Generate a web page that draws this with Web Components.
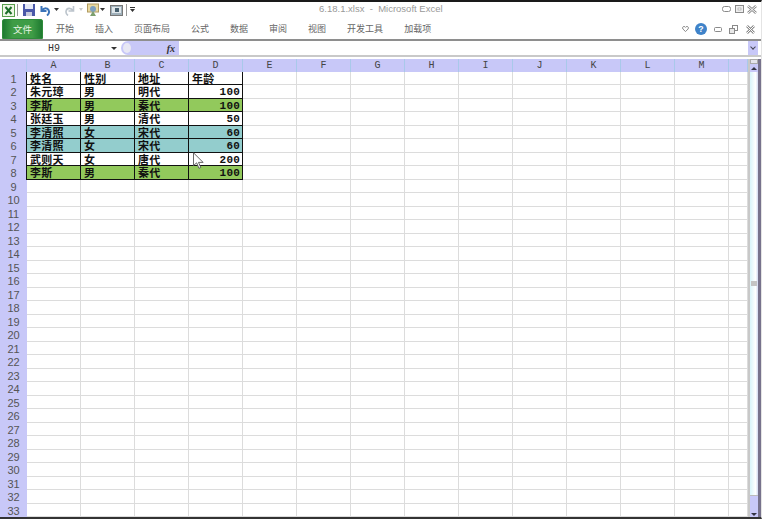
<!DOCTYPE html>
<html lang="zh">
<head>
<meta charset="utf-8">
<title>6.18.1.xlsx - Microsoft Excel</title>
<style>
html, body { margin: 0; height: 100%; background: #fff; overflow: hidden; }
body { font-family: "Liberation Sans", "Noto Sans CJK SC", sans-serif; }
excel-window { width: 762px; height: 519px; }
</style>
</head>
<body>
<excel-window>
	<title-bar slot="top">6.18.1.xlsx&nbsp; - &nbsp;Microsoft Excel</title-bar>
	<ribbon-tabs slot="top"></ribbon-tabs>
	<formula-bar slot="top" name="H9"></formula-bar>
	<sheet-grid></sheet-grid>
	<sheet-scrollbar slot="side"></sheet-scrollbar>
</excel-window>

<script>
// window frame, everything else sits in its slots
class ExcelWindow extends HTMLElement {
	constructor() {
		super();
		this.attachShadow({ mode: 'open' });
		this.shadowRoot.innerHTML = `
		<style>
			:host { display: flex; flex-direction: column; box-sizing: border-box; border-top: 2px solid #1a1a1a; border-bottom: 2px solid #333; border-right: 1px solid #e4e4e4; background: #fff; overflow: hidden; }
			.body { flex: 1; display: flex; min-height: 0; }
		</style>
		<slot name="top"></slot>
		<div class="body"><slot></slot><slot name="side"></slot></div>`;
	}
}

class TitleBar extends HTMLElement {
	constructor() {
		super();
		this.attachShadow({ mode: 'open' });
		this.shadowRoot.innerHTML = `
		<style>
			:host { display: flex; align-items: center; height: 16px; position: relative; font: 9.5px "Liberation Sans", sans-serif; color: #999; }
			.qat { display: flex; align-items: center; padding-left: 2px; }
			.title { position: absolute; left: 319px; top: 0; line-height: 13px; white-space: nowrap; }
			.sep { width: 1px; height: 12px; background: #999; }
			.caption { margin-left: auto; display: flex; padding-right: 4px; align-items: center; margin-top: -2px; }
			svg { display: block; flex: none; }
		</style>
		<div class="qat">
			<svg width="13" height="13" viewBox="0 0 13 13"><rect x=".5" y=".5" width="12" height="12" fill="#eef6e6" stroke="#5aa04e"/><path d="M3.500 3l6 7M9.500 3l-6 7" stroke="#1d6f2a" stroke-width="2"/></svg>
			<span class="sep" style="margin-left:2px"></span>
			<svg width="12" height="12" viewBox="0 0 12 12" style="margin-left:5px"><rect x="0" y="0" width="12" height="12" fill="#4a58a8"/><rect x="2" y="0" width="8" height="5" fill="#e4e8f5"/><rect x="3" y="8" width="6" height="4" fill="#c8cbdd"/></svg>
			<svg width="11" height="11" viewBox="0 0 11 11" style="margin-left:5px"><path d="M1.500 1v5h5M2 5.500C4 2.500 8.500 2.500 9 6.500c.2 1.500-.6 3-2 4" fill="none" stroke="#3a73b8" stroke-width="2"/></svg>
			<svg width="5" height="4" viewBox="0 0 5 4" style="margin-left:3px"><path d="M0 0h5L2.500 3z" fill="#333"/></svg>
			<svg width="11" height="11" viewBox="0 0 11 11" style="margin-left:5px"><path d="M9.500 1v5h-5M9 5.500C7 2.500 2.500 2.500 2 6.500c-.2 1.500.6 3 2 4" fill="none" stroke="#bcc4cc" stroke-width="1.600"/></svg>
			<svg width="4" height="4" viewBox="0 0 4 4" style="margin-left:4px"><path d="M0 0h4L2 3z" fill="#ccc"/></svg>
			<svg width="12" height="14" viewBox="0 0 12 14" style="margin-left:4px"><rect x=".5" y="1" width="11" height="8" fill="#e9d9a0" stroke="#b09a60"/><circle cx="6" cy="6" r="3" fill="#7da0c0"/><path d="M3 13l3-5 3 5z" fill="#7d9f6e"/></svg>
			<svg width="5" height="4" viewBox="0 0 5 4" style="margin-left:1px"><path d="M0 0h5L2.500 3z" fill="#333"/></svg>
			<svg width="13" height="11" viewBox="0 0 13 11" style="margin-left:5px"><rect x=".5" y=".5" width="12" height="10" fill="#9fb0ba" stroke="#777"/><rect x="2" y="2" width="9" height="6" fill="#dfe6ea"/><rect x="5" y="3" width="4" height="4" fill="#47606f"/></svg>
			<span class="sep" style="margin-left:3px"></span>
			<svg width="5" height="6" viewBox="0 0 5 6" style="margin-left:3px"><path d="M0 0h5v1H0zM0 2h5L2.500 5z" fill="#333"/></svg>
		</div>
		<div class="title"><slot></slot></div>
		<div class="caption">
			<svg width="9" height="6" viewBox="0 0 9 6"><rect x=".5" y=".5" width="8" height="5" rx="2" fill="#fff" stroke="#8a8a8a"/></svg>
			<svg width="9" height="8" viewBox="0 0 9 8" style="margin-left:4px"><rect x=".5" y=".5" width="8" height="7" fill="#eee" stroke="#8a8a8a"/><rect x="3" y="3" width="3" height="2" fill="#fff" stroke="#999" stroke-width=".6"/></svg>
			<svg width="10" height="9" viewBox="0 0 10 9" style="margin-left:3px"><path d="M1 1l8 7M9 1l-8 7" stroke="#8a8a8a" stroke-width="2.500"/><path d="M1 1l8 7M9 1l-8 7" stroke="#fff" stroke-width="1"/></svg>
		</div>`;
	}
}

class RibbonTabs extends HTMLElement {
	constructor() {
		super();
		this.attachShadow({ mode: 'open' });
		const tabs = [['开始', 13], ['插入', 21], ['页面布局', 21], ['公式', 21], ['数据', 21], ['审阅', 21], ['视图', 21], ['开发工具', 21], ['加载项', 21]];
		this.shadowRoot.innerHTML = `
		<style>
			:host { display: flex; align-items: flex-end; height: 21px; border-bottom: 2px solid #8e8e8e; font-size: 9px; color: #666; }
			.file { box-sizing: border-box; width: 41px; height: 20px; margin-left: 2px; border-radius: 2px 2px 0 0; border: 1px solid #2e8b3a; background: linear-gradient(90deg, #1e7a30, #3f9c46 25%, #3f9c46 75%, #1e7a30); color: #e8f5e4; font-size: 9.5px; display: flex; align-items: center; justify-content: center; }
			.tab { height: 20px; line-height: 21px; white-space: nowrap; }
			.right { margin-left: auto; display: flex; align-items: center; height: 20px; padding-right: 6px; }
			svg { display: block; flex: none; }
		</style>
		<div class="file">文件</div>
		${tabs.map(t => `<div class="tab" style="margin-left:${t[1]}px">${t[0]}</div>`).join('')}
		<div class="right">
			<svg width="7" height="6" viewBox="0 0 8 7"><path d="M4 6.500L1 3.500C0 2 1 .5 2.300.5 3 .5 3.600 1 4 1.600 4.400 1 5 .5 5.700.5 7 .5 8 2 7 3.500z" fill="#fff" stroke="#777"/></svg>
			<svg width="12" height="12" viewBox="0 0 13 13" style="margin-left:6px"><circle cx="6.500" cy="6.500" r="6.500" fill="#3f83c9"/><text x="6.500" y="10" text-anchor="middle" font-family="Liberation Sans" font-weight="700" font-size="9.500" fill="#fff">?</text></svg>
			<svg width="8" height="5" viewBox="0 0 8 5" style="margin-left:7px"><rect x=".5" y=".5" width="7" height="4" rx="1" fill="#fff" stroke="#8a8a8a"/></svg>
			<svg width="9" height="9" viewBox="0 0 9 9" style="margin-left:7px"><rect x="3.500" y=".5" width="5" height="5" fill="#fff" stroke="#8a8a8a"/><rect x=".5" y="3.500" width="5" height="5" fill="#e8e8e8" stroke="#8a8a8a"/></svg>
			<svg width="9" height="9" viewBox="0 0 9 9" style="margin-left:8px"><path d="M1 1l7 7M8 1l-7 7" stroke="#8a8a8a" stroke-width="2.500"/><path d="M1 1l7 7M8 1l-7 7" stroke="#fff" stroke-width="1"/></svg>
		</div>`;
	}
}

class FormulaBar extends HTMLElement {
	constructor() {
		super();
		this.attachShadow({ mode: 'open' });
		this.shadowRoot.innerHTML = `
		<style>
			:host { display: flex; height: 14px; border-bottom: 2px solid #c9c9c9; margin-bottom: 2px; background: #fff; font: 10px "Liberation Mono", monospace; color: #333; align-items: stretch; }
			.name { width: 121px; box-sizing: border-box; display: flex; align-items: center; padding: 1px 0 0 48px; position: relative; }
			.name i { position: absolute; left: 111px; top: 6px; border: 3px solid transparent; border-top: 3px solid #333; border-bottom: 0; }
			.mid { width: 58px; background: #c8c8f8; border-radius: 7px 0 0 7px; display: flex; align-items: center; justify-content: flex-end; padding-right: 4px; box-sizing: border-box; font: italic 700 10px "Liberation Serif", serif; color: #333; position: relative; }
			.mid b { position: absolute; left: 2px; top: 2px; width: 8px; height: 10px; background: #e8e8f4; border-radius: 50%; }
			.input { flex: 1; }
			.more { width: 10px; margin-right: 3px; background: #c8c8f8; display: flex; align-items: center; justify-content: center; }
			.more i { width: 3px; height: 3px; border: solid #445; border-width: 0 1.5px 1.5px 0; transform: rotate(45deg); margin-top: -2px; }
		</style>
		<div class="name">${this.getAttribute('name')}<i></i></div>
		<div class="mid"><b></b>fx</div>
		<div class="input"></div>
		<div class="more"><i></i></div>`;
	}
}

class SheetGrid extends HTMLElement {
	constructor() {
		super();
		this.attachShadow({ mode: 'open' });
		const G = 'g', T = 't';
		const data = [
			['姓名', '性别', '地址', '年龄', ''],
			['朱元璋', '男', '明代', 100, ''],
			['李斯', '男', '秦代', 100, G],
			['张廷玉', '男', '清代', 50, ''],
			['李清照', '女', '宋代', 60, T],
			['李清照', '女', '宋代', 60, T],
			['武则天', '女', '唐代', 200, ''],
			['李斯', '男', '秦代', 100, G]
		];
		const letters = 'ABCDEFGHIJKLM'.split('');
		let html = '<div class="corner"></div>';
		letters.forEach(l => html += `<div class="col">${l}</div>`);
		html += '<div class="col"></div>';
		for (let r = 1; r <= 33; r++) {
			html += `<div class="row">${r}</div>`;
			const line = data[r - 1];
			for (let c = 0; c < 14; c++) {
				if (line && c < 4) {
					const num = typeof line[c] === 'number';
					html += `<div class="cell data ${line[4]} ${num ? 'num' : ''}">${line[c]}</div>`;
				} else {
					html += '<div class="cell"></div>';
				}
			}
		}
		this.shadowRoot.innerHTML = `
		<style>
			:host { display: block; flex: 1; min-width: 0; position: relative; overflow: hidden; background: #fff; }
			.grid { display: grid; grid-template-columns: 27px repeat(13, 54px) 19px; grid-template-rows: 12.5px repeat(33, 13.5px); }
			.corner, .col, .row { background: #c8c8f8; color: #555; display: flex; align-items: center; justify-content: center; box-sizing: border-box; padding-top: 1px; }
			.corner { border-right: 1px solid #b0c8ee; }
			.col { border-right: 1px solid #a9c9ea; color: #444; font: 10px "Liberation Mono", monospace; }
			.row { font: 11px "Liberation Sans", sans-serif; }
			.cell { box-sizing: border-box; border-right: 1px solid #dcdcdc; border-bottom: 1px solid #dcdcdc; }
			.data { border-color: #111; color: #111; font-size: 11px; font-weight: 700; line-height: 12px; padding: 1px 0 0 3px; white-space: nowrap; letter-spacing: .2px; }
			.g { background: #92c95c; }
			.t { background: #93cdcd; }
			.num { text-align: right; padding: 1px 2px 0 0; font: 700 11px/13px "Liberation Mono", monospace; }
			svg { position: absolute; left: 193px; top: 93px; }
		</style>
		<div class="grid">${html}</div>
		<svg width="11" height="18" viewBox="0 0 12 19"><path d="M.5.5v14l3.500-3 2.500 6 2-1-2.500-5.500h5z" fill="#fff" stroke="#555"/></svg>`;
		// the table's left edge
		this.shadowRoot.querySelectorAll('.data').forEach((el, i) => {
			if (i % 4 === 0) el.style.boxShadow = '-1px 0 0 #111';
		});
	}
}

class SheetScrollbar extends HTMLElement {
	constructor() {
		super();
		this.attachShadow({ mode: 'open' });
		this.shadowRoot.innerHTML = `
		<style>
			:host { display: flex; flex-direction: column; flex: none; width: 13px; box-sizing: border-box; background: #c8c8f8; border-left: 2px solid #c8c8c8; border-right: 3px solid #77728c; }
			.split { height: 5px; background: #e4e4ec; border: 1px solid #aaa; box-sizing: border-box; }
			.btn { height: 8px; display: flex; align-items: center; justify-content: center; background: #c8c8f8; }
			.up { border: 3px solid transparent; border-bottom: 3px solid #334; border-top: 0; }
			.thumb { height: 424px; flex: none; background: linear-gradient(90deg, #d8f4fa, #fff 70%, #cfd8f0); border-bottom: 1px solid #bbb; box-sizing: border-box; display: flex; align-items: center; justify-content: center; }
			.thumb i { width: 6px; height: 5px; background: #c4c4c4; }
			.track { flex: 1; }
			.down { border: 3px solid transparent; border-top: 3px solid #334; border-bottom: 0; }
		</style>
		<div class="split"></div>
		<div class="btn"><i class="up"></i></div>
		<div class="thumb"><i></i></div>
		<div class="track"></div>
		<div class="btn" style="height:5px"><i class="down"></i></div>`;
	}
}

customElements.define('excel-window', ExcelWindow);
customElements.define('title-bar', TitleBar);
customElements.define('ribbon-tabs', RibbonTabs);
customElements.define('formula-bar', FormulaBar);
customElements.define('sheet-grid', SheetGrid);
customElements.define('sheet-scrollbar', SheetScrollbar);
</script>
</body>
</html>
